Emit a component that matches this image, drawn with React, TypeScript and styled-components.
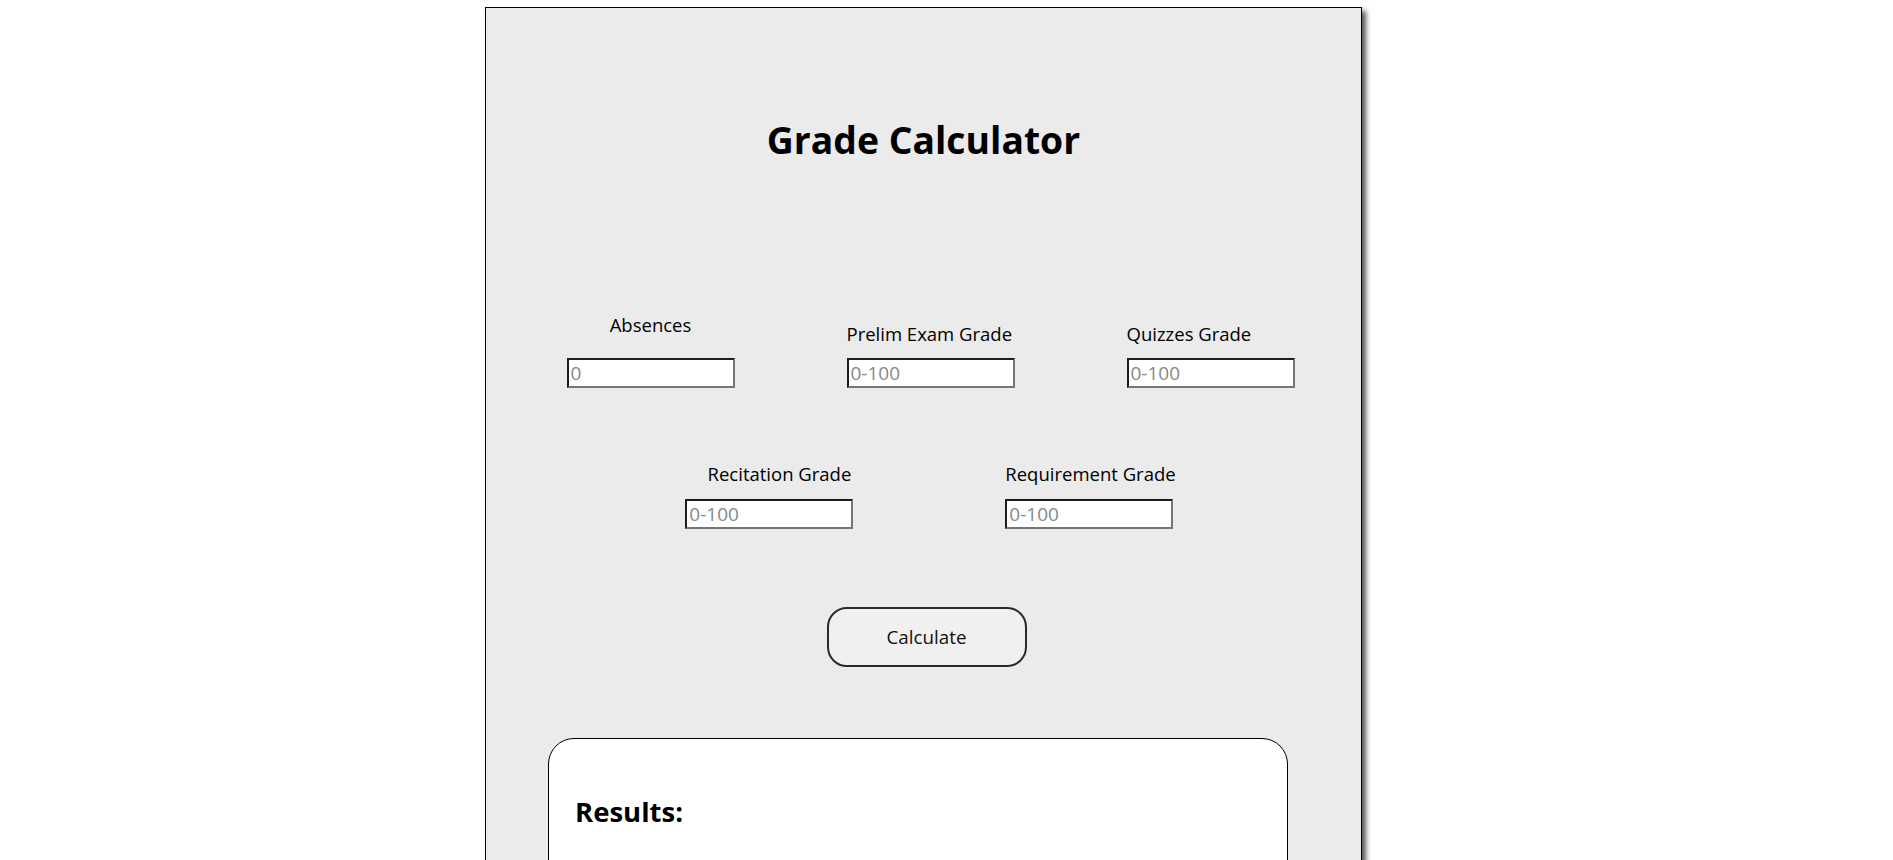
import React, { useState } from 'react';
import styled, { createGlobalStyle } from 'styled-components';

const GlobalStyle = createGlobalStyle`
  html, body {
    margin: 0;
    padding: 0;
    background: #ffffff;
    overflow: hidden;
  }

  body {
    font-family: 'Open Sans', 'Noto Sans', sans-serif;
    color: #000;
  }
`;

const Panel = styled.main`
  width: 875px;
  min-height: 1100px;
  margin: 7px 0 0 485px;
  background: #ebebeb;
  border: 1px solid #000;
  box-shadow: 4px 4px 5px rgba(0, 0, 0, 0.65);
  display: flex;
  flex-direction: column;
  align-items: center;
`;

const Title = styled.h1`
  margin: 109px 0 0;
  font-size: 37.3px;
  line-height: 46px;
  font-weight: 700;
`;

const Row = styled.div<{ $gap: number; $top: number }>`
  display: flex;
  align-items: flex-end;
  gap: ${(p) => p.$gap}px;
  margin-top: ${(p) => p.$top}px;
  margin-left: 14px;
`;

const Field = styled.label<{ $align: 'flex-start' | 'center' | 'flex-end' }>`
  display: flex;
  flex-direction: column;
  align-items: ${(p) => p.$align};
`;

const LabelText = styled.span<{ $space: number; $inset?: number }>`
  font-size: 18.5px;
  line-height: 24px;
  margin-bottom: ${(p) => p.$space}px;
  margin-right: ${(p) => p.$inset ?? 0}px;
`;

const Input = styled.input`
  box-sizing: border-box;
  width: 168px;
  height: 30px;
  padding: 0 2px;
  border-style: solid;
  border-width: 2px;
  border-color: #1c1c1c #767676 #767676 #1c1c1c;
  background: #fff;
  font-family: 'Open Sans', 'Noto Sans', sans-serif;
  font-size: 19px;
  color: #000;
  outline: none;

  &::placeholder {
    color: #888888;
  }
`;

const CalcButton = styled.button`
  margin: 78px 0 0 6px;
  width: 200px;
  height: 60px;
  border: 2px solid #2a2a2a;
  border-radius: 20px;
  background: #f0f0f0;
  font-family: 'Open Sans', 'Noto Sans', sans-serif;
  font-size: 18.8px;
  color: #111;
  cursor: pointer;
`;

const Results = styled.section`
  align-self: flex-start;
  margin: 71px 0 0 62px;
  width: 740px;
  min-height: 300px;
  box-sizing: border-box;
  padding: 55px 26px 24px;
  background: #fff;
  border: 1px solid #000;
  border-radius: 26px;
`;

const ResultsTitle = styled.h2`
  margin: 0;
  font-size: 27.5px;
  line-height: 36px;
  font-weight: 700;
`;

type FieldDef = {
  key: string;
  label: string;
  placeholder: string;
  align: 'flex-start' | 'center' | 'flex-end';
  space: number;
  inset?: number;
};

const firstRow: FieldDef[] = [
  { key: 'absences', label: 'Absences', placeholder: '0', align: 'center', space: 21 },
  { key: 'prelim', label: 'Prelim Exam Grade', placeholder: '0-100', align: 'flex-start', space: 12 },
  { key: 'quizzes', label: 'Quizzes Grade', placeholder: '0-100', align: 'flex-start', space: 12 },
];

const secondRow: FieldDef[] = [
  { key: 'recitation', label: 'Recitation Grade', placeholder: '0-100', align: 'flex-end', space: 13, inset: 2 },
  { key: 'requirement', label: 'Requirement Grade', placeholder: '0-100', align: 'flex-start', space: 13 },
];

export default function App() {
  const [values, setValues] = useState<Record<string, string>>({});

  const renderField = (f: FieldDef) => (
    <Field key={f.key} $align={f.align}>
      <LabelText $space={f.space} $inset={f.inset}>
        {f.label}
      </LabelText>
      <Input
        type="number"
        placeholder={f.placeholder}
        value={values[f.key] ?? ''}
        onChange={(e) => setValues((prev) => ({ ...prev, [f.key]: e.target.value }))}
      />
    </Field>
  );

  return (
    <>
      <GlobalStyle />
      <Panel>
        <Title>Grade Calculator</Title>
        <Row $gap={112} $top={150}>
          {firstRow.map(renderField)}
        </Row>
        <Row $gap={152} $top={74}>
          {secondRow.map(renderField)}
        </Row>
        <CalcButton type="button">Calculate</CalcButton>
        <Results>
          <ResultsTitle>Results:</ResultsTitle>
        </Results>
      </Panel>
    </>
  );
}
